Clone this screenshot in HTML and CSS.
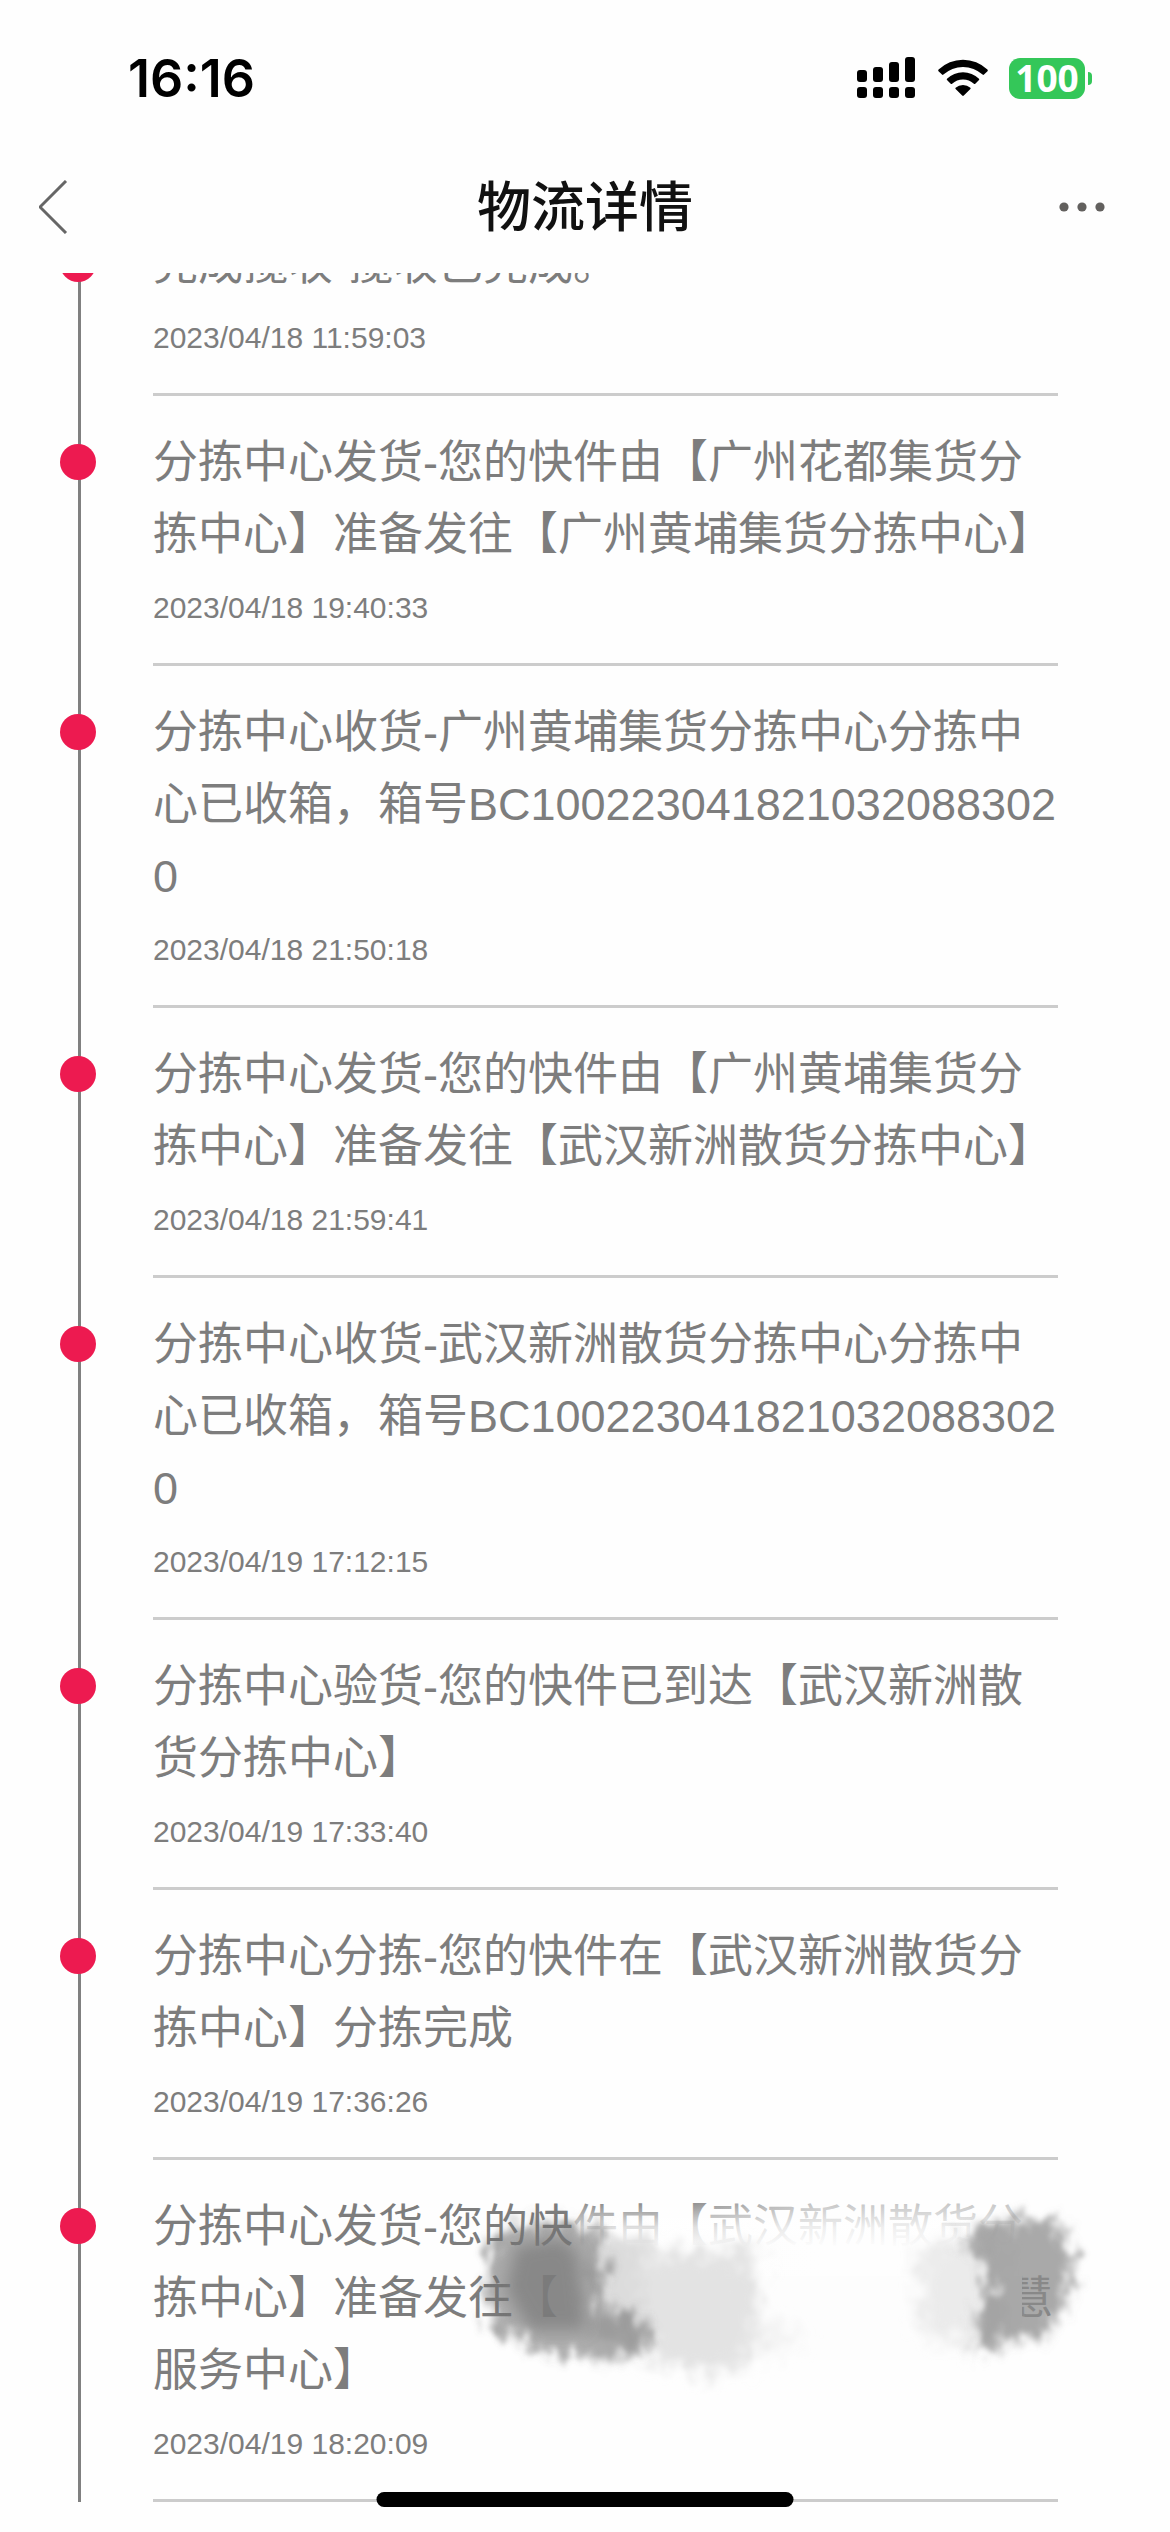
FILE: index.html
```html
<!DOCTYPE html>
<html lang="zh-CN">
<head>
  <meta charset="UTF-8">
  <meta name="viewport" content="width=device-width, initial-scale=1">
  <title>物流详情</title>
  <link rel="stylesheet" href="styles.css">
</head>
<body>

<header class="top">
  <div class="status-bar">
    <span class="clock">16:16</span>
    <div class="status-icons">
      <svg class="signal" width="60" height="42" viewBox="0 0 60 42" aria-hidden="true">
        <rect x="0" y="13" width="10" height="12" rx="3"/>
        <rect x="16" y="10" width="10" height="15" rx="3"/>
        <rect x="32" y="5" width="10" height="20" rx="3"/>
        <rect x="48" y="0" width="10" height="25" rx="3"/>
        <rect x="0" y="30" width="10" height="11" rx="3"/>
        <rect x="16" y="30" width="10" height="11" rx="3"/>
        <rect x="32" y="30" width="10" height="11" rx="3"/>
        <rect x="48" y="30" width="10" height="11" rx="3"/>
      </svg>
      <svg class="wifi" width="50" height="42" viewBox="0 0 50 42" aria-hidden="true">
        <path d="M0.5 14.2 Q-0.2 13.4 0.6 12.6 A35 35 0 0 1 49.4 12.6 Q50.2 13.4 49.5 14.2 L46 17.6 Q45.3 18.2 44.6 17.6 A29 29 0 0 0 5.4 17.6 Q4.7 18.2 4 17.6 Z"/>
        <path d="M9 23 Q8.4 22.4 9 21.8 A23 23 0 0 1 41 21.8 Q41.6 22.4 41 23 L37.3 26.7 Q36.6 27.3 35.9 26.7 A16 16 0 0 0 14.1 26.7 Q13.4 27.3 12.7 26.7 Z"/>
        <path d="M17.6 32 Q17 31.4 17.6 30.8 A11 11 0 0 1 32.4 30.8 Q33 31.4 32.4 32 L25.8 38.6 Q25 39.4 24.2 38.6 Z"/>
      </svg>
      <div class="battery"><span class="battery-level">100</span></div>
    </div>
  </div>
  <nav class="nav-bar">
    <button class="nav-btn" aria-label="返回">
      <svg width="30" height="54" viewBox="0 0 30 54" aria-hidden="true">
        <path d="M27 1 L1 27 L27 53" fill="none" stroke="#666" stroke-width="3"/>
      </svg>
    </button>
    <h1>物流详情</h1>
    <button class="nav-btn nav-more" aria-label="更多">
      <svg width="46" height="10" viewBox="0 0 46 10" aria-hidden="true">
        <circle cx="5" cy="5" r="4.6"/>
        <circle cx="23" cy="5" r="4.6"/>
        <circle cx="41" cy="5" r="4.6"/>
      </svg>
    </button>
  </nav>
</header>

<ol class="timeline">
  <li class="step">
    <div class="rail"><i class="dot"></i></div>
    <div class="info">
      <p>完成揽收-揽收已完成。</p>
      <time>2023/04/18 11:59:03</time>
    </div>
  </li>
  <li class="step">
    <div class="rail"><i class="dot"></i></div>
    <div class="info">
      <p>分拣中心发货-您的快件由【广州花都集货分拣中心】准备发往【广州黄埔集货分拣中心】</p>
      <time>2023/04/18 19:40:33</time>
    </div>
  </li>
  <li class="step">
    <div class="rail"><i class="dot"></i></div>
    <div class="info">
      <p>分拣中心收货-广州黄埔集货分拣中心分拣中心已收箱，箱号BC1002230418210320883020</p>
      <time>2023/04/18 21:50:18</time>
    </div>
  </li>
  <li class="step">
    <div class="rail"><i class="dot"></i></div>
    <div class="info">
      <p>分拣中心发货-您的快件由【广州黄埔集货分拣中心】准备发往【武汉新洲散货分拣中心】</p>
      <time>2023/04/18 21:59:41</time>
    </div>
  </li>
  <li class="step">
    <div class="rail"><i class="dot"></i></div>
    <div class="info">
      <p>分拣中心收货-武汉新洲散货分拣中心分拣中心已收箱，箱号BC1002230418210320883020</p>
      <time>2023/04/19 17:12:15</time>
    </div>
  </li>
  <li class="step">
    <div class="rail"><i class="dot"></i></div>
    <div class="info">
      <p>分拣中心验货-您的快件已到达【武汉新洲散货分拣中心】</p>
      <time>2023/04/19 17:33:40</time>
    </div>
  </li>
  <li class="step">
    <div class="rail"><i class="dot"></i></div>
    <div class="info">
      <p>分拣中心分拣-您的快件在【武汉新洲散货分拣中心】分拣完成</p>
      <time>2023/04/19 17:36:26</time>
    </div>
  </li>
  <li class="step">
    <div class="rail"><i class="dot"></i></div>
    <div class="info">
      <p>分拣中心发货-您的快件由【武汉新洲散货分拣中心】准备发往【<span class="hidden-name"></span>慧服务中心】</p>
      <time>2023/04/19 18:20:09</time>
      <!-- brush strokes over the station name -->
      <svg class="smudge" width="640" height="270" viewBox="0 0 640 270" aria-hidden="true">
        <defs>
          <linearGradient id="veil" x1="0" y1="0" x2="0" y2="1">
            <stop offset="0" stop-color="#fff" stop-opacity="0.1"/>
            <stop offset="0.16" stop-color="#fff" stop-opacity="0.75"/>
            <stop offset="0.3" stop-color="#fdfdfd" stop-opacity="1"/>
          </linearGradient>
          <linearGradient id="veilSide" x1="0" y1="0" x2="1" y2="0">
            <stop offset="0" stop-color="#fff" stop-opacity="0"/>
            <stop offset="0.4" stop-color="#fff" stop-opacity="0.5"/>
            <stop offset="1" stop-color="#fff" stop-opacity="0.5"/>
          </linearGradient>
          <filter id="brush" x="-15%" y="-15%" width="130%" height="130%">
            <feTurbulence type="fractalNoise" baseFrequency="0.08 0.05" numOctaves="3" seed="4" result="n"/>
            <feGaussianBlur in="SourceGraphic" stdDeviation="6" result="b"/>
            <feDisplacementMap in="b" in2="n" scale="36" xChannelSelector="R" yChannelSelector="G"/>
            <feGaussianBlur stdDeviation="2"/>
          </filter>
          <filter id="haze" x="-15%" y="-15%" width="130%" height="130%">
            <feTurbulence type="fractalNoise" baseFrequency="0.06 0.05" numOctaves="3" seed="9" result="n"/>
            <feGaussianBlur in="SourceGraphic" stdDeviation="8" result="b"/>
            <feDisplacementMap in="b" in2="n" scale="40" xChannelSelector="R" yChannelSelector="G"/>
            <feGaussianBlur stdDeviation="2"/>
          </filter>
          <filter id="soft" x="-20%" y="-20%" width="140%" height="140%">
            <feGaussianBlur stdDeviation="8"/>
          </filter>
        </defs>
        <path d="M104 22 H552 V180 H104 Z" fill="url(#veil)"/>
        <path d="M210 22 H560 V96 H210 Z" fill="url(#veilSide)"/>
        <g filter="url(#haze)">
          <path d="M120 60 L178 54 L182 176 L120 150 Z" fill="#dcdcdc"/>
          <path d="M170 76 L284 68 L290 165 L274 186 L230 194 L176 176 Z" fill="#e3e3e3"/>
          <path d="M284 140 L330 150 L324 172 L284 168 Z" fill="#f3f3f3"/>
          <path d="M448 66 L528 56 L536 160 L500 164 L448 150 Z" fill="#ebebeb"/>
        </g>
        <g filter="url(#brush)">
          <path d="M18 52 L62 42 L132 46 L136 84 L124 126 L174 138 L178 170 L146 180 L80 174 L32 154 L16 130 Z" fill="#6e6e6e" fill-opacity="0.58"/>
          <path d="M492 60 L504 48 L540 40 L588 38 L594 62 L606 80 L594 126 L580 152 L540 160 L508 172 L504 146 L518 112 L512 76 Z" fill="#8c8c8c" fill-opacity="0.75"/>
        </g>
        <path d="M46 66 L92 58 L108 74 L116 150 L60 150 L36 110 Z" fill="#7c7c7c" fill-opacity="0.75" filter="url(#soft)"/>
      </svg>
    </div>
  </li>
</ol>

<div class="home-bar"></div>

</body>
</html>
```
FILE: styles.css
```css
:root {
  --text: #7d7d7d;
  --rail: #808080;
  --line: #ccc;
  --accent: #ed1a50;
  --green: #34c759;
}
* { box-sizing: border-box; }
body {
  margin: 0;
  background: #fefefe;
  color: var(--text);
  font-family: "Liberation Sans", "Noto Sans CJK SC", sans-serif;
}

.top {
  position: sticky; top: 0; z-index: 10;
  background: #fefefe;
}
.status-bar {
  display: flex;
  justify-content: space-between;
  align-items: center;
  height: 141px;
  padding: 15px 78px 0 128px;
  color: #000;
}
.clock {
  font-family: Inter, sans-serif;
  font-size: 52px;
  font-weight: 600;
}
.status-icons {
  display: flex;
  align-items: center;
  gap: 21px;
}
.battery {
  display: flex;
  align-items: center;
  gap: 3px;
}
.battery::after {
  content: "";
  width: 4px; height: 13px;
  background: var(--green);
  border-radius: 0 6px 6px 0;
}
.battery-level {
  width: 76px;
  height: 41px;
  border-radius: 11px;
  background: var(--green);
  color: #fff;
  font: bold 37px/39px "Open Sans", sans-serif;
  text-align: center;
}

.nav-bar {
  display: flex;
  justify-content: space-between;
  align-items: center;
  height: 132px;
  padding: 0 39px;
}
.nav-bar h1 {
  margin: 0 0 6px;
  color: #111;
  font-family: "Noto Sans CJK SC", sans-serif;
  font-size: 54px;
  font-weight: 500;
  line-height: 72px;
}
.nav-btn {
  display: flex;
  align-items: center;
  width: 72px;
  height: 72px;
  padding: 0;
  border: none;
  background: none;
  cursor: pointer;
}
.nav-more svg { fill: #62605e; }

/* first step is scrolled halfway under the header */
.timeline {
  margin: -75px 0 0;
  padding: 0 0 30px;
  list-style: none;
}
.step {
  display: grid;
  grid-template-columns: 153px 1fr;
  padding-right: 112px;
}
.rail {
  padding: 48px 0 0 60px;
  background: linear-gradient(var(--rail), var(--rail)) 78px 0 / 3px 100% no-repeat;
}
.dot {
  display: block;
  width: 36px; height: 36px;
  border-radius: 50%;
  background: var(--accent);
}
.info {
  position: relative;
  padding: 31px 0 33px;
  border-bottom: 3px solid var(--line);
}
.info p {
  margin: 0 0 14px;
  font-size: 45px;
  line-height: 72px;
  word-break: break-all;
  text-spacing-trim: space-all;
}
.info time {
  display: block;
  font-size: 30px;
  line-height: 45px;
}
.hidden-name {
  display: inline-block;
  width: 10em;
}
.smudge {
  position: absolute;
  top: 20px; left: 317px;
}

.home-bar {
  position: fixed;
  bottom: 25px; left: 50%;
  z-index: 20;
  width: 417px; height: 15px;
  border-radius: 8px;
  background: #000;
  transform: translateX(-50%);
}
```
